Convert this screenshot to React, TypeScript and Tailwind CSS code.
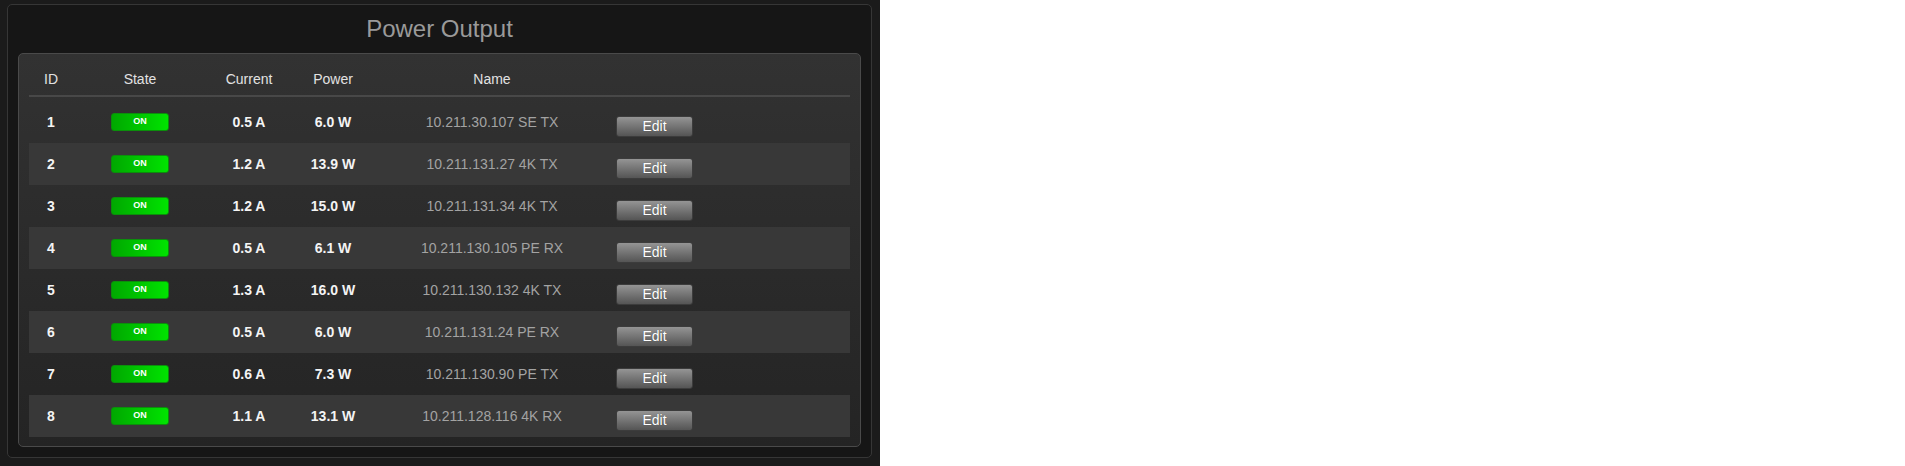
const outputs = [
  { id: 1, current: "0.5 A", power: "6.0 W", name: "10.211.30.107 SE TX" },
  { id: 2, current: "1.2 A", power: "13.9 W", name: "10.211.131.27 4K TX" },
  { id: 3, current: "1.2 A", power: "15.0 W", name: "10.211.131.34 4K TX" },
  { id: 4, current: "0.5 A", power: "6.1 W", name: "10.211.130.105 PE RX" },
  { id: 5, current: "1.3 A", power: "16.0 W", name: "10.211.130.132 4K TX" },
  { id: 6, current: "0.5 A", power: "6.0 W", name: "10.211.131.24 PE RX" },
  { id: 7, current: "0.6 A", power: "7.3 W", name: "10.211.130.90 PE TX" },
  { id: 8, current: "1.1 A", power: "13.1 W", name: "10.211.128.116 4K RX" },
]

const cols = "grid grid-cols-[44px_134px_84px_84px_234px_1fr]"

export default function App() {
  return (
    <div className="w-[880px] h-[466px] bg-[#1b1b1b] pt-[4px] pl-[7px] font-['Liberation_Sans',Arial,sans-serif]">
      <div className="w-[865px] h-[454px] rounded-[5px] border border-[#363636] bg-[#161616] px-[10px] pt-[10px]">
        <h1 className="text-center text-[24px] leading-[28px] text-[#9a9a9a] mb-[10px]">Power Output</h1>

        <div className="rounded-[5px] border border-[#4a4a4a] bg-gradient-to-b from-[#323232] to-[#242424] px-[10px] pb-[9px]">
          <div className={`${cols} pt-[15px] pb-[6px] border-b-2 border-[#484848] text-[14px] leading-[20px] text-[#e2e2e2] text-center`}>
            <div>ID</div>
            <div>State</div>
            <div>Current</div>
            <div>Power</div>
            <div>Name</div>
            <div></div>
          </div>

          <div className="mt-[4px]">
            {outputs.map((o, i) => (
              <div
                key={o.id}
                className={`${cols} h-[42px] items-center text-center text-[14px] ${i % 2 === 1 ? "bg-[#383838]" : ""}`}
              >
                <div className="font-bold text-[#f4f4f4]">{o.id}</div>
                <div className="flex justify-center">
                  <span className="w-[58px] h-[18px] flex items-center justify-center rounded-[3px] border border-[#0b8f0b] bg-gradient-to-r from-[#00a800] to-[#00e400] text-[9px] font-bold text-white">
                    ON
                  </span>
                </div>
                <div className="font-bold text-[#f4f4f4]">{o.current}</div>
                <div className="font-bold text-[#f4f4f4]">{o.power}</div>
                <div className="text-[#a3a3a3]">{o.name}</div>
                <div className="flex pl-[7px] mt-[9px]">
                  <button className="w-[77px] h-[21px] rounded-[3px] border border-[#3c3c3c] bg-gradient-to-b from-[#959595] to-[#555555] text-[14px] leading-[19px] text-white [text-shadow:0_0_1px_rgba(0,0,0,0.4)]">
                    Edit
                  </button>
                </div>
              </div>
            ))}
          </div>
        </div>
      </div>
    </div>
  )
}
